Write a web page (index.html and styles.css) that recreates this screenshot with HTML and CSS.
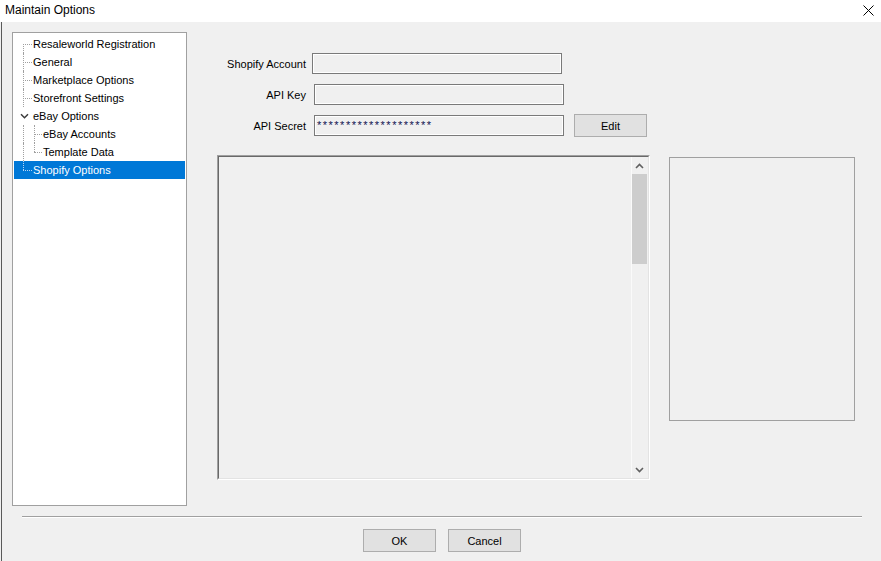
FILE: index.html
```html
<!DOCTYPE html>
<html lang="en">
<head>
    <meta charset="UTF-8">
    <meta name="viewport" content="width=device-width, initial-scale=1.0">
    <title>Maintain Options</title>
    <link rel="stylesheet" href="styles.css">
</head>
<body>

    <div class="window">
        <div class="titlebar">
            <span class="title">Maintain Options</span>
            <svg class="close" width="11" height="11" viewBox="0 0 11 11">
                <path d="M0.5 0.5 L10.5 10.5 M10.5 0.5 L0.5 10.5" stroke="#000" stroke-width="1" fill="none"/>
            </svg>
        </div>

        <div class="main">
            <div class="content">
                <div class="tree">
                    <div class="row"><span class="guide g-first"></span><span class="label">Resaleworld Registration</span></div>
                    <div class="row"><span class="guide g-tee"></span><span class="label">General</span></div>
                    <div class="row"><span class="guide g-tee"></span><span class="label">Marketplace Options</span></div>
                    <div class="row"><span class="guide g-tee"></span><span class="label">Storefront Settings</span></div>
                    <div class="row">
                        <span class="guide g-toggle">
                            <svg width="9" height="6" viewBox="0 0 9 6"><path d="M1 1.2 L4.5 4.7 L8 1.2" stroke="#3c3c3c" stroke-width="1.5" fill="none"/></svg>
                        </span>
                        <span class="label">eBay Options</span>
                    </div>
                    <div class="row"><span class="guide g-pipe"></span><span class="guide sub g-tee"></span><span class="label">eBay Accounts</span></div>
                    <div class="row"><span class="guide g-pipe"></span><span class="guide sub g-elbow"></span><span class="label">Template Data</span></div>
                    <div class="row selected"><span class="guide g-elbow"></span><span class="label">Shopify Options</span></div>
                </div>

                <div class="panel">
                    <div class="fields">
                        <div class="field field-account">
                            <span class="field-label">Shopify Account</span>
                            <div class="textbox"></div>
                        </div>
                        <div class="field field-key">
                            <span class="field-label">API Key</span>
                            <div class="textbox"></div>
                        </div>
                        <div class="field field-secret">
                            <span class="field-label">API Secret</span>
                            <div class="textbox secret">********************</div>
                            <button class="btn btn-edit">Edit</button>
                        </div>
                    </div>

                    <div class="boxes">
                        <div class="listbox">
                            <div class="listbox-inner">
                                <div class="list-area"></div>
                                <div class="scrollbar">
                                    <div class="scroll-btn">
                                        <svg width="9" height="6" viewBox="0 0 9 6"><path d="M1 5 L4.5 1.5 L8 5" stroke="#606060" stroke-width="1.6" fill="none"/></svg>
                                    </div>
                                    <div class="thumb"></div>
                                    <div class="track"></div>
                                    <div class="scroll-btn">
                                        <svg width="9" height="6" viewBox="0 0 9 6"><path d="M1 1 L4.5 4.5 L8 1" stroke="#606060" stroke-width="1.6" fill="none"/></svg>
                                    </div>
                                </div>
                            </div>
                        </div>
                        <div class="preview"></div>
                    </div>
                </div>
            </div>

            <div class="separator"></div>

            <div class="footer">
                <button class="btn">OK</button>
                <button class="btn">Cancel</button>
            </div>
        </div>
    </div>

</body>
</html>
```

FILE: styles.css
```css
body {
    margin: 0;
    padding: 0;
    background-color: #f0f0f0;
    font-family: "Liberation Sans", Arial, sans-serif;
    font-size: 11px;
    color: #000;
    overflow: hidden;
}

.window {
    width: 881px;
    height: 561px;
    display: flex;
    flex-direction: column;
}

/* title bar */
.titlebar {
    height: 22px;
    background-color: #fff;
    display: flex;
    align-items: center;
    justify-content: space-between;
    padding: 0 7px 0 5px;
    flex-shrink: 0;
}

.title {
    font-size: 12px;
    line-height: 20px;
    margin-bottom: 2px;
}

.close {
    margin-bottom: 1px;
}

.main {
    flex: 1;
    box-shadow: inset 1px 0 0 #f0f0f0, inset 2px 0 0 #5a5a5a;
}

.content {
    display: flex;
    padding-top: 10px;
}

/* tree view */
.tree {
    margin-left: 12px;
    width: 175px;
    height: 474px;
    box-sizing: border-box;
    border: 1px solid #a0a0a0;
    background-color: #fff;
    padding: 2px 1px 0 1px;
}

.row {
    display: flex;
    height: 18px;
    line-height: 18px;
    white-space: nowrap;
}

.row.selected {
    background-color: #0078d7;
    color: #fff;
}

.guide {
    display: grid;
    grid-template-columns: 9px 10px;
    grid-template-rows: 9px 9px;
    width: 19px;
    height: 18px;
    flex-shrink: 0;
}

.guide.sub {
    grid-template-columns: 1px 9px;
    width: 10px;
}

.guide::before,
.guide::after {
    content: "";
    grid-column: 2;
    box-sizing: border-box;
}

.guide::before {
    border-left: 1px dotted #a0a0a0;
}

.guide::after {
    grid-row: 2;
    width: 9px;
    border-top: 1px dotted #a0a0a0;
}

.guide.sub::after {
    width: 8px;
}

.g-tee::before,
.g-pipe::before {
    grid-row: 1 / span 2;
}

.g-elbow::before {
    grid-row: 1;
}

.g-first::before {
    grid-row: 2;
}

.g-pipe::after {
    border-top: none;
}

.selected .guide::before,
.selected .guide::after {
    border-color: #b9d6f2;
}

.g-toggle {
    display: flex;
    align-items: center;
    padding-left: 6px;
    box-sizing: border-box;
}

.g-toggle::before,
.g-toggle::after {
    display: none;
}

/* right panel */
.panel {
    margin-left: 30px;
    padding-top: 21px;
}

.field {
    display: flex;
    align-items: center;
    height: 21px;
    margin-bottom: 10px;
}

.field-key {
    margin-bottom: 9px;
}

.field-secret {
    height: 23px;
    margin-bottom: 0;
}

.field-label {
    width: 89px;
    text-align: right;
    margin-right: 8px;
}

.field-account .field-label {
    margin-right: 6px;
}

.textbox {
    width: 250px;
    height: 21px;
    box-sizing: border-box;
    border: 1px solid #7a7a7a;
    box-shadow: inset 0 0 0 1px #fff;
    padding: 0 2px;
    line-height: 19px;
    white-space: nowrap;
}

.secret {
    color: #101050;
    letter-spacing: 1.5px;
}

.btn {
    width: 73px;
    height: 23px;
    padding: 0;
    background-color: #e1e1e1;
    border: 1px solid #adadad;
    font-family: inherit;
    font-size: 11px;
    color: #000;
}

.btn-edit {
    margin-left: 10px;
}

.boxes {
    display: flex;
    align-items: flex-start;
    margin-top: 18px;
}

.listbox {
    width: 433px;
    height: 325px;
    box-sizing: border-box;
    border: 1px solid;
    border-color: #a0a0a0 #fff #fff #a0a0a0;
}

.listbox-inner {
    height: 100%;
    box-sizing: border-box;
    border: 1px solid;
    border-color: #696969 #e3e3e3 #e3e3e3 #696969;
    display: flex;
}

.list-area {
    flex: 1;
}

.scrollbar {
    width: 17px;
    box-sizing: border-box;
    border-left: 1px solid #fafafa;
    padding-right: 1px;
    display: flex;
    flex-direction: column;
}

.scroll-btn {
    height: 17px;
    display: flex;
    align-items: center;
    justify-content: center;
    flex-shrink: 0;
}

.thumb {
    height: 90px;
    background-color: #cdcdcd;
}

.track {
    flex: 1;
}

.preview {
    margin-left: 19px;
    margin-top: 2px;
    width: 186px;
    height: 264px;
    box-sizing: border-box;
    border: 1px solid #a0a0a0;
}

/* bottom */
.separator {
    margin: 10px 19px 0 22px;
    border-top: 1px solid #a0a0a0;
    border-bottom: 1px solid #fff;
}

.footer {
    display: flex;
    justify-content: center;
    gap: 12px;
    margin-top: 11px;
    padding-left: 3px;
}
```
